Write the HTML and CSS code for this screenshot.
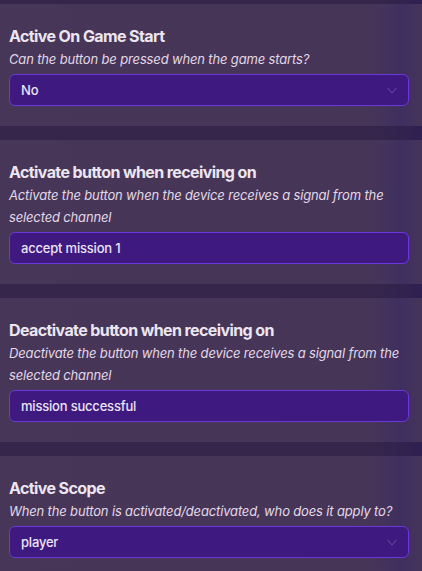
FILE: index.html
```html
<!DOCTYPE html>
<html>
<head>
<meta charset="utf-8">
<link rel="stylesheet" href="styles.css">
</head>
<body>
<div class="panel">
  <section class="field">
    <h2 class="title">Active On Game Start</h2>
    <p class="desc">Can the button be pressed when the game starts?</p>
    <div class="box select"><span>No</span>
      <svg class="chev" width="10" height="7" viewBox="0 0 10 7"><path d="M0.5 0.8 L5 6 L9.5 0.8" fill="none" stroke="currentColor" stroke-width="1"/></svg>
    </div>
  </section>
  <section class="field">
    <h2 class="title">Activate button when receiving on</h2>
    <p class="desc">Activate the button when the device receives a signal from the selected channel</p>
    <div class="box"><span>accept mission 1</span></div>
  </section>
  <section class="field">
    <h2 class="title">Deactivate button when receiving on</h2>
    <p class="desc">Deactivate the button when the device receives a signal from the selected channel</p>
    <div class="box"><span>mission successful</span></div>
  </section>
  <section class="field">
    <h2 class="title">Active Scope</h2>
    <p class="desc">When the button is activated/deactivated, who does it apply to?</p>
    <div class="box select"><span>player</span>
      <svg class="chev" width="10" height="7" viewBox="0 0 10 7"><path d="M0.5 0.8 L5 6 L9.5 0.8" fill="none" stroke="currentColor" stroke-width="1"/></svg>
    </div>
  </section>
</div>
</body>
</html>
```
FILE: styles.css
```css
html, body {
  margin: 0;
  padding: 0;
  height: 100%;
  overflow: hidden;
}
body {
  background: #37264b;
  font-family: Inter, "Liberation Sans", sans-serif;
}
.panel {
  display: flex;
  flex-direction: column;
  gap: 14px;
  padding-top: 4px;
  background: linear-gradient(90deg, #37264b 0%, #37264b 88%, #2e2050 100%);
}
.field {
  background: linear-gradient(90deg, #483658 0%, #473558 88%, #3f2f60 95%, #453459 100%);
  padding: 20px 13px 20px 9px;
}
.title {
  margin: 0;
  font-size: 16px;
  line-height: 24px;
  font-weight: 700;
  letter-spacing: -0.6px;
  color: #ece6f0;
}
.desc {
  margin: 0;
  font-size: 13px;
  line-height: 22px;
  font-style: italic;
  letter-spacing: -0.15px;
  color: #e2d9e8;
}
.box {
  margin-top: 4px;
  box-sizing: border-box;
  height: 32px;
  border: 1px solid #6a38d6;
  border-radius: 6px;
  background: #3e1a80;
  display: flex;
  align-items: center;
  justify-content: space-between;
  padding: 0 11px 0 11px;
  color: #ece4f4;
  font-size: 13px;
  font-weight: 500;
  letter-spacing: -0.2px;
}
.chev {
  color: #6e4fa0;
}
```
